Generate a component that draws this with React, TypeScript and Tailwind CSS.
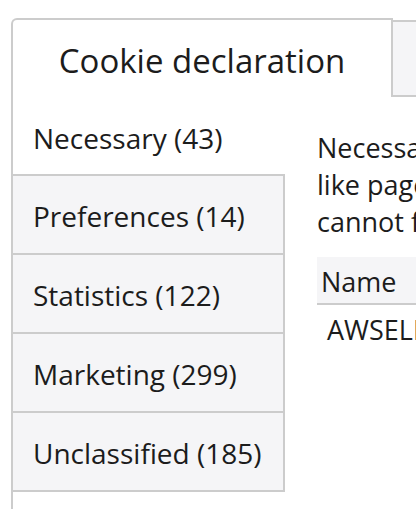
import React from 'react';

const categories = [
  { label: 'Necessary (43)', active: true },
  { label: 'Preferences (14)', active: false },
  { label: 'Statistics (122)', active: false },
  { label: 'Marketing (299)', active: false },
  { label: 'Unclassified (185)', active: false },
];

const App: React.FC = () => {
  return (
    <div
      className="h-[509px] w-full overflow-hidden bg-white pl-[11px] pt-[18px] text-[#1c1c1c]"
      style={{ fontFamily: '"Open Sans", "Noto Sans", sans-serif' }}
    >
      {/* Tab strip */}
      <div className="flex h-[79px]">
        <div className="flex w-[382px] shrink-0 items-center justify-center rounded-tl-[6px] border-l-2 border-r-2 border-t-2 border-[#cccccc] bg-white pt-[4px] text-[33px] leading-none">
          Cookie declaration
        </div>
        <div className="mt-[2px] flex-1 border-b-2 border-t-2 border-[#cccccc] bg-[#f5f5f7]" />
      </div>

      {/* Panel */}
      <div className="flex h-[430px] border-l-2 border-[#cccccc]">
        <div className="flex w-[272px] shrink-0 flex-col">
          {categories.map((c) =>
            c.active ? (
              <div key={c.label} className="flex h-[77px] items-center pl-[20px] pt-[4px] text-[28px] leading-none">
                {c.label}
              </div>
            ) : (
              <div
                key={c.label}
                className="flex h-[79px] items-center border-r-2 border-t-2 border-[#cccccc] bg-[#f5f5f7] pl-[20px] pt-[2px] text-[28px] leading-none"
              >
                {c.label}
              </div>
            )
          )}
          <div className="border-t-2 border-[#cccccc]" />
        </div>

        {/* Content */}
        <div className="ml-[32px] min-w-[760px] pt-[32px]">
          <p className="whitespace-nowrap text-[27px] leading-[37px]">
            Necessary cookies help make a website usable by enabling basic functions
            <br />
            like page navigation and access to secure areas of the website. The website
            <br />
            cannot function properly without these cookies.
          </p>
          <div className="mt-[17px] flex h-[48px] items-center border-b-2 border-[#cccccc] bg-[#f5f5f7] pl-[4px] pt-[2px] text-[27px] leading-none">
            Name
          </div>
          <div className="flex h-[44px] items-center pl-[10px] pt-[4px] text-[27px] leading-none">AWSELB</div>
        </div>
      </div>
    </div>
  );
};

export default App;
